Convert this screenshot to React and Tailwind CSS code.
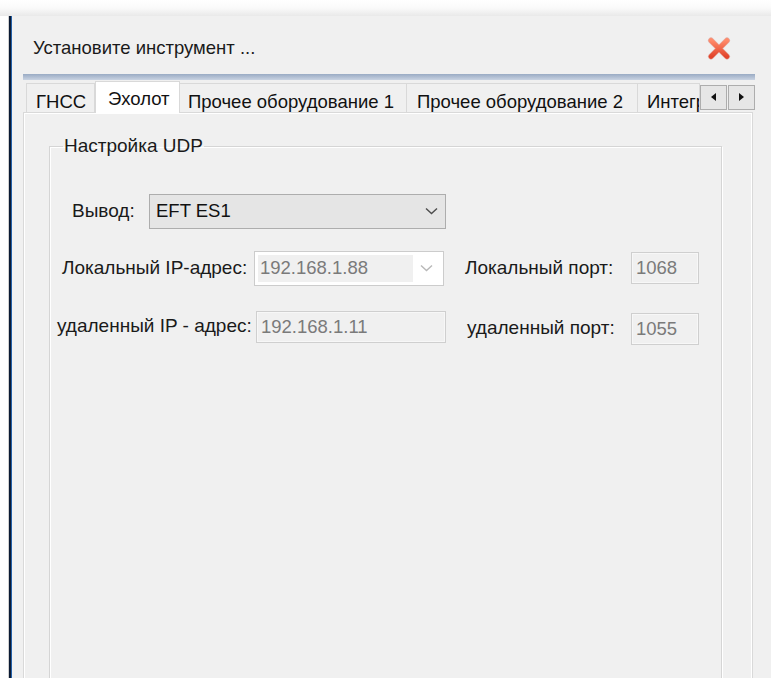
const font = { fontFamily: '"Liberation Sans", Arial, sans-serif' }

const Chevron = ({ color = '#4d4d4d' }) => (
  <svg width="13" height="8" viewBox="0 0 13 8" fill="none">
    <path d="M1 1.5 L6.5 6.5 L12 1.5" stroke={color} strokeWidth="1.4" />
  </svg>
)

const CloseIcon = () => (
  <svg width="24" height="23" viewBox="0 0 24 23">
    <defs>
      <linearGradient id="xg" x1="0" y1="0" x2="0" y2="1">
        <stop offset="0" stopColor="#ff8a6a" />
        <stop offset="1" stopColor="#e2452c" />
      </linearGradient>
    </defs>
    <path
      d="M4 3.5 L20 19.5 M20 3.5 L4 19.5"
      stroke="#c9361f"
      strokeWidth="6"
      strokeLinecap="round"
      opacity="0.35"
    />
    <path
      d="M4 3.5 L20 19.5 M20 3.5 L4 19.5"
      stroke="url(#xg)"
      strokeWidth="4.6"
      strokeLinecap="round"
    />
  </svg>
)

const Tab = ({ label, width, pad, active }) =>
  active ? (
    <div
      className={`${width} h-[32px] shrink-0 bg-white border border-b-0 border-[#d9d9d9] text-[18.5px] text-[#111] pt-[3px] ${pad} whitespace-nowrap overflow-hidden relative top-[1px] z-10`}
    >
      {label}
    </div>
  ) : (
    <div
      className={`${width} h-[29px] shrink-0 bg-[#f0f0f0] border border-b-0 border-l-0 border-[#d9d9d9] text-[18.5px] text-[#111] pt-[4px] ${pad} whitespace-nowrap overflow-hidden`}
    >
      {label}
    </div>
  )

const ScrollButton = ({ dir }) => (
  <div className="w-[27px] h-[25px] shrink-0 bg-[#e6e6e6] border border-[#adadad] flex items-center justify-center">
    <svg width="5" height="8" viewBox="0 0 5 8">
      {dir === 'left' ? <path d="M5 0 L0 4 L5 8 Z" fill="#111" /> : <path d="M0 0 L5 4 L0 8 Z" fill="#111" />}
    </svg>
  </div>
)

const Field = ({ value, width }) => (
  <div
    className={`${width} h-[32px] shrink-0 bg-[#f0f0f0] border border-[#cfcfcf] shadow-[inset_0_0_0_1px_#f7f7f7] flex items-center pl-[4px] text-[18.5px] text-[#7a7a7a]`}
  >
    {value}
  </div>
)

export default function App() {
  return (
    <div className="w-[771px] h-[678px] bg-white flex flex-col overflow-hidden" style={font}>
      {/* shadow above the window */}
      <div className="h-[16px] shrink-0 bg-gradient-to-b from-white via-[#fafafa] to-[#e9e9e9]" />

      <div className="flex-1 flex ml-[8px] min-h-0">
        {/* window frame edge */}
        <div className="w-[4px] shrink-0 flex">
          <div className="w-[1px] bg-[#d0d0d0]" />
          <div className="w-[2px] bg-[#0b1a33]" />
          <div className="w-[1px] bg-[#2360a8]" />
        </div>

        <div className="flex-1 bg-[#f0f0f0] flex flex-col min-h-0">
          {/* title */}
          <div className="h-[58px] shrink-0 flex items-center justify-between pl-[21px] pr-[40px] pt-[6px]">
            <span className="text-[18.5px] text-[#1a1a1a]">Установите инструмент ...</span>
            <CloseIcon />
          </div>

          {/* tab control */}
          <div className="ml-[11px] w-[732px] flex-1 flex flex-col min-h-0">
            <div className="h-[6px] shrink-0 bg-gradient-to-b from-[#9aabc4] to-[#c9d3e2]" />
            <div className="h-[32px] shrink-0 flex items-end">
              <div className="w-[3px] shrink-0" />
              <div className="w-[69px] h-[29px] shrink-0 bg-[#f0f0f0] border border-b-0 border-[#d9d9d9] text-[18.5px] text-[#111] pt-[4px] pl-[9px]">
                ГНСС
              </div>
              <Tab label="Эхолот" width="w-[85px]" pad="pl-[12px]" active />
              <Tab label="Прочее оборудование 1" width="w-[227px]" pad="pl-[8px]" />
              <Tab label="Прочее оборудование 2" width="w-[231px]" pad="pl-[10px]" />
              <Tab label="Интеграция" width="w-[62px]" pad="pl-[9px]" />
              <div className="flex gap-[1px] self-center mt-[2px]">
                <ScrollButton dir="left" />
                <ScrollButton dir="right" />
              </div>
            </div>

            {/* tab page */}
            <div className="flex-1 w-[730px] border border-b-0 border-[#d9d9d9] shadow-[inset_1px_1px_0_#ffffff,inset_-1px_0_0_#ffffff] bg-[#f0f0f0] pt-[19px] pl-[25px]">
              <fieldset className="w-[673px] h-[600px] border border-[#d5d5d5] shadow-[inset_1px_1px_0_#ffffff,1px_1px_0_#ffffff]">
                <legend className="ml-[13px] px-[1px] text-[19px] text-[#1a1a1a]">Настройка UDP</legend>

                {/* output */}
                <div className="flex items-center pl-[22px] mt-[33px]">
                  <span className="w-[77px] shrink-0 text-[19px] text-[#1a1a1a]">Вывод:</span>
                  <div className="w-[297px] h-[35px] bg-[#e5e5e5] border border-[#adadad] flex items-center justify-between pl-[6px] pr-[7px] text-[18.5px] text-[#111]">
                    <span>EFT ES1</span>
                    <Chevron />
                  </div>
                </div>

                {/* local */}
                <div className="flex items-center pl-[12px] mt-[22px]">
                  <span className="w-[192px] shrink-0 text-[19px] text-[#1a1a1a] whitespace-nowrap">
                    Локальный IP-адрес:
                  </span>
                  <div className="w-[190px] h-[35px] shrink-0 bg-white border border-[#cccccc] flex items-center p-[3px]">
                    <div className="w-[155px] h-full bg-[#f0f0f0] flex items-center pl-[2px] text-[18.5px] text-[#7a7a7a]">
                      192.168.1.88
                    </div>
                    <div className="flex-1 flex justify-center">
                      <Chevron color="#b8b8b8" />
                    </div>
                  </div>
                  <span className="ml-[21px] w-[166px] shrink-0 text-[19px] text-[#1a1a1a] whitespace-nowrap">
                    Локальный порт:
                  </span>
                  <Field value="1068" width="w-[68px]" />
                </div>

                {/* remote */}
                <div className="flex items-center pl-[7px] mt-[23px]">
                  <span className="w-[199px] shrink-0 text-[19px] text-[#1a1a1a] whitespace-nowrap">
                    удаленный IP - адрес:
                  </span>
                  <Field value="192.168.1.11" width="w-[190px]" />
                  <div className="flex items-center mt-[4px]">
                    <span className="ml-[21px] w-[164px] shrink-0 text-[19px] text-[#1a1a1a] whitespace-nowrap">
                      удаленный порт:
                    </span>
                    <Field value="1055" width="w-[68px]" />
                  </div>
                </div>
              </fieldset>
            </div>
          </div>
        </div>
      </div>
    </div>
  )
}
